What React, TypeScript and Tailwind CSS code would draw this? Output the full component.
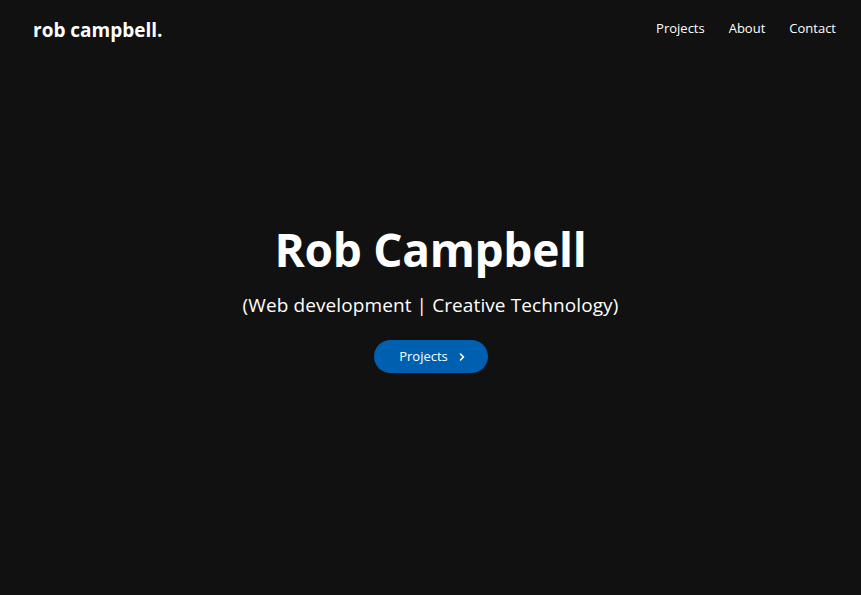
import React from "react";

export default function App() {
  return (
    <div className="min-h-[595px] h-[595px] w-full bg-[#111111] text-white flex flex-col" style={{ fontFamily: '"Open Sans", "Noto Sans", sans-serif' }}>
      <header className="flex items-center justify-between pl-[33px] pr-[25px] pt-[6px] h-[56px]">
        <div className="text-[19px] font-bold tracking-[0px] pb-[1px]">rob campbell.</div>
        <nav className="flex items-center gap-[24px] text-[13px] pb-[4px]">
          <a>Projects</a>
          <a>About</a>
          <a>Contact</a>
        </nav>
      </header>
      <main className="flex flex-col items-center pt-[170px]">
        <h1 className="text-[46px] font-bold leading-none tracking-[-0.3px]">Rob Campbell</h1>
        <p className="mt-[24px] text-[19px] leading-none tracking-[0.1px]">(Web development | Creative Technology)</p>
        <button className="mt-[25px] h-[33px] w-[114px] rounded-full bg-[#0060b0] text-[13px] flex items-center justify-center gap-[10px] pl-[4px]">
          <span>Projects</span>
          <svg width="8" height="10" viewBox="0 0 8 10" fill="none" stroke="white" strokeWidth="1.6" strokeLinecap="round" strokeLinejoin="round">
            <path d="M2.5 2l3 3-3 3" />
          </svg>
        </button>
      </main>
    </div>
  );
}
